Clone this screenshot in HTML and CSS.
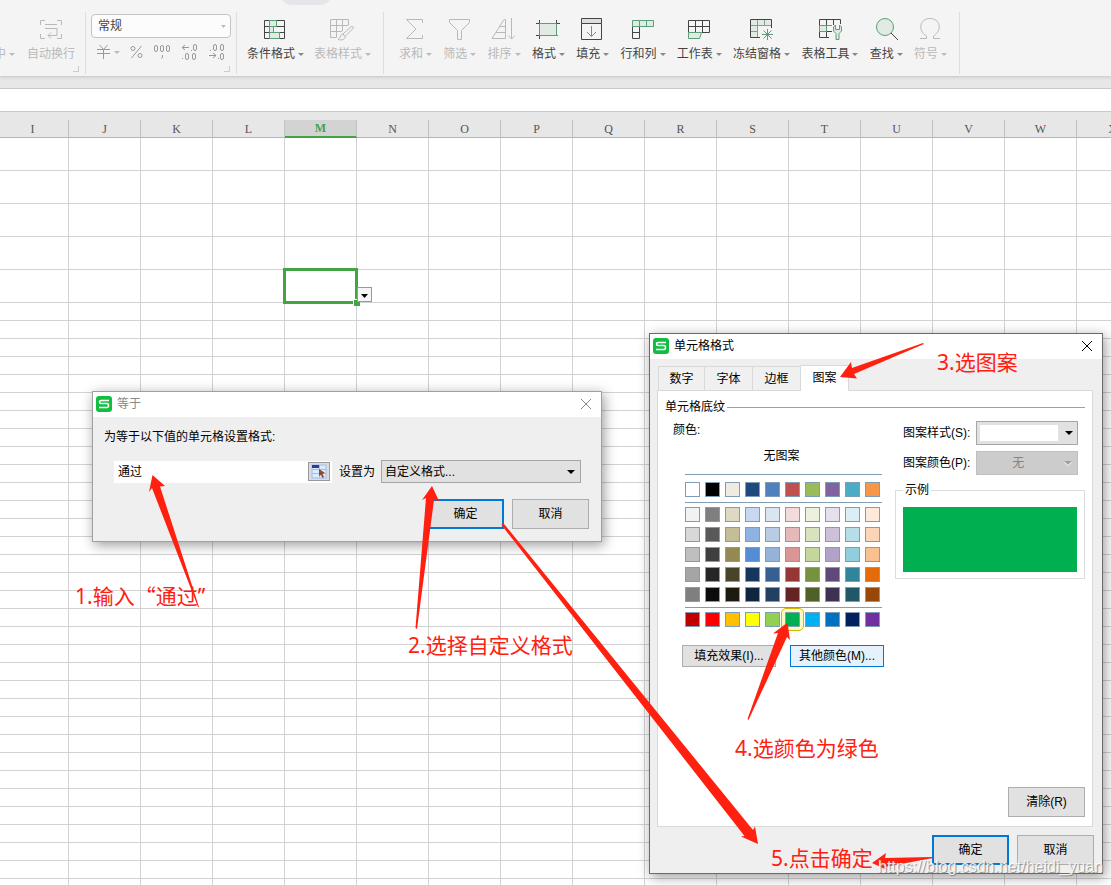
FILE: index.html
```
<!DOCTYPE html>
<html lang="zh-CN">
<head>
<meta charset="utf-8">
<title>单元格格式</title>
<link rel="stylesheet" href="styles.css">
</head>
<body>
<main class="app">
  <header class="ribbon">
    <span class="tab-hint"></span>
    <section class="group group-align">
      <button class="tool off cut"><span class="label caret">中</span></button>
      <button class="tool off">
        <svg class="icon" viewBox="0 0 24 24"><path d="M1.500 8V3.500H6M18 3.500H22.500V8M1.500 17V21.500H6M18 21.500H22.500V17M6 7.500H18M6 11.500H18M18 11.500V18.500H9M12 15.500L9 18.500L12 21.500"/></svg>
        <span class="label">自动换行</span>
      </button>
    </section>
    <section class="group group-number">
      <select class="format-select" aria-label="数字格式"><option>常规</option></select>
      <div class="number-tools">
        <button class="mini caret" aria-label="货币"><svg viewBox="0 0 15 16"><path d="M3.500 1L7.500 5.500L11.500 1M1 5.500H14M1 9.500H14M7.500 5.500V15"/></svg></button>
        <button class="mini" aria-label="百分比"><svg viewBox="0 0 13 16"><circle cx="3" cy="4.500" r="2"/><circle cx="10" cy="11.500" r="2"/><path d="M11.500 2L1.500 14"/></svg></button>
        <button class="mini" aria-label="千位分隔"><svg viewBox="0 0 18 16"><rect x="1.500" y="1.500" width="3" height="6" rx="1.500"/><rect x="7.500" y="1.500" width="3" height="6" rx="1.500"/><rect x="13.500" y="1.500" width="3" height="6" rx="1.500"/><path d="M9.500 11V13L8.500 14.500"/></svg></button>
        <button class="mini" aria-label="增加小数位"><svg viewBox="0 0 18 16"><path d="M2 3.500H9M5 1L2 3.500L5 6M11 6.500H12M2 14.500H3"/><rect x="13.500" y="0.500" width="3" height="6" rx="1.500"/><rect x="5.500" y="9.500" width="3" height="6" rx="1.500"/><rect x="12.500" y="9.500" width="3" height="6" rx="1.500"/></svg></button>
        <button class="mini" aria-label="减少小数位"><svg viewBox="0 0 18 16"><path d="M2 6.500H3M1 11.500H8M5 9L8 11.500L5 14M10 14.500H11"/><rect x="5.500" y="0.500" width="3" height="6" rx="1.500"/><rect x="12.500" y="0.500" width="3" height="6" rx="1.500"/><rect x="12.500" y="9.500" width="3" height="6" rx="1.500"/></svg></button>
      </div>
    </section>
    <section class="group group-style">
      <button class="tool">
        <svg class="icon" viewBox="0 0 24 24"><path d="M.500 3.500H20.500V21.500H.500ZM.500 9.500H20.500M.500 15.500H20.500M12.500 3.500V9.500"/><path class="green tint" d="M5.500 3.500H12.500V9.500H5.500ZM5.500 9.500H9.500V15.500H5.500ZM5.500 15.500H15.500V21.500H5.500Z"/></svg>
        <span class="label caret">条件格式</span>
      </button>
      <button class="tool off">
        <svg class="icon" viewBox="0 0 24 24"><path d="M6.500 20.500H.500V2.500H18.500V8M.500 8.500H18.500M.500 14.500H12M6.500 2.500V20.500M12.500 2.500V14"/><path d="M22 9L13 17L15 19.500L23.500 11ZM13 17C10 17 11 21 8 22.500C12 23.500 15.500 22.500 15 19.500"/></svg>
        <span class="label caret">表格样式</span>
      </button>
    </section>
    <section class="group group-tools">
      <button class="tool off">
        <svg class="icon" viewBox="0 0 24 24"><path d="M18.500 6V2.500H2.500L12 12L2.500 21.500H18.500V18"/></svg>
        <span class="label caret">求和</span>
      </button>
      <button class="tool off">
        <svg class="icon" viewBox="0 0 24 24"><path d="M1.500 2.500H21.500V5.500L13.500 13.500V22.500H9.500V13.500L1.500 5.500Z"/></svg>
        <span class="label caret">筛选</span>
      </button>
      <button class="tool off">
        <svg class="icon" viewBox="0 0 24 24"><path d="M13.500 21.500V2.500H12L0 21.500ZM8 9.500H13.500M4 15.500H13.500M19.500 1V22M16 18.500L19.500 22L23 18.500"/></svg>
        <span class="label caret">排序</span>
      </button>
      <button class="tool">
        <svg class="icon" viewBox="0 0 24 24"><path d="M0 6.500H24M0 18.500H15M3.500 3V22M20.500 3V7"/><path class="green tint" d="M3.500 6.500H20.500V18.500H3.500Z"/><path class="green" d="M20 18.500H22"/></svg>
        <span class="label caret">格式</span>
      </button>
      <button class="tool">
        <svg class="icon" viewBox="0 0 24 24"><path class="shade" d="M.500 1.500H20.500V6.500H.500Z"/><path d="M.500 6.500V22.500H20.500V6.500"/><path class="green" d="M10.500 9V19M6 15L10.500 19.500L15 15"/></svg>
        <span class="label caret">填充</span>
      </button>
      <button class="tool">
        <svg class="icon" viewBox="0 0 24 24"><path d="M1.500 9.500V21.500H8.500V9.500M1.500 15.500H8.500"/><path class="green tint" d="M1.500 3.500H22.500V9.500H1.500ZM8.500 3.500V9.500M15.500 3.500V9.500"/></svg>
        <span class="label caret">行和列</span>
      </button>
      <button class="tool">
        <svg class="icon" viewBox="0 0 24 24"><path d="M1.500 15.500V3.500H22.500V15.500H15M1.500 9.500H22.500M8.500 3.500V15.500M15.500 3.500V15.500"/><path class="green tint" d="M1.500 15.500H14.500L12.500 21.500H1.500Z"/></svg>
        <span class="label caret">工作表</span>
      </button>
      <button class="tool">
        <svg class="icon" viewBox="0 0 24 24"><path class="fill-tint" d="M0 2H21V9H7V21H0Z"/><path class="mid" d="M7.500 3V20M.500 8.500H21M.500 14.500H7M14.500 3V8"/><path d="M10 20.500H.500V2.500H21.500V11"/><path class="green" d="M17.500 12V23M12 17.500H23M13.500 13.500L21.500 21.500M21.500 13.500L13.500 21.500"/></svg>
        <span class="label caret">冻结窗格</span>
      </button>
      <button class="tool">
        <svg class="icon" viewBox="0 0 24 24"><path d="M11 20.500H1.500V2.500H22.500V7M8.500 2.500V20M15.500 2.500V8M1.500 14.500H14"/><path class="green tint" d="M1.500 8.500H8.500V14.500H1.500ZM8.500 8.500H14"/><path class="green tint" d="M17.500 8L15.500 10V14L18 16.500V22.500H21V16.500L23.500 14V10L21.500 8V12.500H17.500Z"/></svg>
        <span class="label caret">表格工具</span>
      </button>
      <button class="tool">
        <svg class="icon" viewBox="0 0 24 24"><circle class="green tint" cx="11" cy="10" r="8.500"/><path d="M17 16L24 23"/></svg>
        <span class="label caret">查找</span>
      </button>
      <button class="tool off">
        <svg class="icon" viewBox="0 0 24 24"><path d="M2 21.500H8.500V19C-1 13 2 1.500 12 1.500S25 13 15.500 19V21.500H22"/></svg>
        <span class="label caret">符号</span>
      </button>
    </section>
  </header>
  <div class="formula-bar"></div>
  <section class="sheet">
    <table class="cells">
      <thead><tr id="columns"></tr></thead>
      <tbody id="rows"></tbody>
    </table>
  </section>

  <section class="dialog dialog-equal" aria-label="等于">
    <div class="titlebar">
      <svg class="logo" viewBox="0 0 16 16"><rect class="logo-bg" width="16" height="16" rx="3"/><path d="M13 4.500H5Q3.500 4.500 3.500 6T5 7.500H11Q12.500 7.500 12.500 9.500T11 11.500H3"/></svg>
      <span class="title">等于</span>
      <button class="close" aria-label="关闭"><svg viewBox="0 0 12 12"><path d="M1 1L11 11M11 1L1 11"/></svg></button>
    </div>
    <div class="equal-body">
      <label for="value">为等于以下值的单元格设置格式:</label>
      <div class="equal-row">
        <div class="ref-box">
          <input id="value" type="text" value="通过">
          <button class="picker" aria-label="选择区域"><svg viewBox="0 0 16 15"><rect class="p1" x="1" y="1" width="14" height="13"/><path class="p2" d="M1 5.500H15M1 9.500H15M8.500 1V14"/><rect class="p3" x="1" y="1" width="7" height="3"/><path class="p4" d="M8 5L14 9L11.500 10L13 13L11.500 14L10 11L8 12Z"/></svg></button>
        </div>
        <label for="preset">设置为</label>
        <select id="preset" class="combo"><option>自定义格式...</option></select>
      </div>
      <div class="actions">
        <button class="btn primary">确定</button>
        <button class="btn">取消</button>
      </div>
    </div>
  </section>

  <section class="dialog dialog-format" aria-label="单元格格式">
    <div class="titlebar">
      <svg class="logo" viewBox="0 0 16 16"><rect class="logo-bg" width="16" height="16" rx="3"/><path d="M13 4.500H5Q3.500 4.500 3.500 6T5 7.500H11Q12.500 7.500 12.500 9.500T11 11.500H3"/></svg>
      <span class="title">单元格格式</span>
      <button class="close" aria-label="关闭"><svg viewBox="0 0 12 12"><path d="M1 1L11 11M11 1L1 11"/></svg></button>
    </div>
    <div class="format-body">
      <nav class="tabs">
        <button class="tab">数字</button><button class="tab">字体</button><button class="tab">边框</button><button class="tab active">图案</button>
      </nav>
      <div class="panel">
        <h2 class="section-title">单元格底纹</h2>
        <div class="columns">
          <div class="colors">
            <p class="colors-label">颜色:</p>
            <button class="no-pattern">无图案</button>
            <div class="palette" id="palette"></div>
            <div class="color-actions">
              <button class="btn short">填充效果(I)...</button>
              <button class="btn short hover">其他颜色(M)...</button>
            </div>
          </div>
          <div class="options">
            <div class="field"><label for="style">图案样式(S):</label><select id="style" class="combo swatch-combo"><option></option></select></div>
            <div class="field"><label for="color">图案颜色(P):</label><select id="color" class="combo" disabled><option>无</option></select></div>
            <fieldset class="sample"><legend>示例</legend><div class="sample-fill"></div></fieldset>
          </div>
        </div>
        <button class="btn clear">清除(R)</button>
      </div>
      <div class="actions">
        <button class="btn primary">确定</button>
        <button class="btn">取消</button>
      </div>
    </div>
  </section>

  <p class="note note-1">1.输入<span class="quoted">“通过</span>”</p>
  <p class="note note-2">2.选择自定义格式</p>
  <p class="note note-3">3.选图案</p>
  <p class="note note-4">4.选颜色为绿色</p>
  <p class="note note-5">5.点击确定</p>
  <svg class="arrows" viewBox="0 0 1111 885" width="1111" height="885">
    <path d="M152.500 475L165 486L160 486.500L199 607H198L152 488L149 492Z"/>
    <path d="M432 486L439 501L434 500L417 629L415.500 628L426 498L422 500Z"/>
    <path d="M502.500 523.500L504.500 524.500L753 830L755 826.500L758 844L741 836.500L744.500 836L501.500 525Z"/>
    <path d="M840 377L851 362L852 368L923 343L924 344L854 374L857 378.500Z"/>
    <path d="M787.500 622.500L773 633.500L778 633L747.500 719L748.500 720L787 637L790 640Z"/>
    <path d="M872 863L886 853L885 858L932 857L933 858L885 867L887 870Z"/>
  </svg>
  <p class="watermark">https://blog.csdn.net/heidi_yuan</p>
</main>
<script src="script.js"></script>
</body>
</html>
```
FILE: styles.css
```
* { box-sizing: border-box; }
body {
  margin: 0;
  font: 12px/16px "Liberation Sans", "Noto Sans CJK SC", sans-serif;
  color: #000;
}
button, input, select { font: inherit; color: inherit; margin: 0; }
button { padding: 0; border: 0; background: none; }
p, h2 { margin: 0; font: inherit; }
.app {
  position: relative;
  display: flex;
  flex-direction: column;
  height: 100vh;
  overflow: hidden;
  background: #e7e7e7;
}

/* ribbon */
.ribbon {
  position: relative;
  display: flex;
  flex: none;
  height: 76px;
  padding-top: 12px;
  background: #f4f4f4;
  color: #444;
  box-shadow: 0 1px 3px #c4c4c4;
}
.tab-hint {
  position: absolute;
  left: 280px;
  top: -20px;
  width: 52px;
  height: 25px;
  border-radius: 12px;
  background: #e5e6ea;
}
.group {
  position: relative;
  display: flex;
  justify-content: space-between;
  height: 62px;
  padding-top: 5px;
  border-right: 1px solid #dedede;
}
.group-align { width: 86px; padding-right: 10px; }
.group-number { width: 151px; padding: 2px 5px; flex-direction: column; justify-content: flex-start; }
.group-style { width: 147px; padding-left: 10px; padding-right: 12px; }
.group-tools { width: 576px; padding-left: 15px; padding-right: 12px; }
.group-align::after, .group-number::after {
  content: "";
  position: absolute;
  right: 6px;
  bottom: 2px;
  width: 5px;
  height: 5px;
  border: solid #ccc;
  border-width: 0 1px 1px 0;
}
.tool { display: flex; flex-direction: column; align-items: center; justify-content: flex-start; gap: 5px; white-space: nowrap; }
.tool.cut { padding-top: 29px; margin-left: -6px; }
.off { color: #b9b9b9; }
.icon { width: 24px; height: 24px; fill: none; stroke: currentColor; stroke-width: 1; overflow: visible; }
.green { stroke: #5b9f78; }
.mid { stroke: #8d9b92; }
.tint, .fill-tint { fill: #e1ebe4; }
.fill-tint { stroke: none; }
.shade { fill: #ddd; }
.caret { display: flex; align-items: center; gap: 3px; }
.caret::after {
  content: "";
  border: 3px solid transparent;
  border-top-color: #888;
  border-bottom: 0;
}
.off .caret::after, .mini.caret::after { border-top-color: #bbb; }
.format-select {
  appearance: none;
  height: 24px;
  padding: 0 6px;
  border: 1px solid #c4c4c4;
  border-radius: 4px;
  background: #fcfcfc url("data:image/svg+xml,%3Csvg xmlns='http://www.w3.org/2000/svg' width='5' height='3'%3E%3Cpath d='M0 0h5L2.5 3z' fill='%23bbb'/%3E%3C/svg%3E") no-repeat right 4px center;
}
.number-tools { display: flex; justify-content: space-between; padding: 6px 5px 0; }
.mini svg { display: block; height: 16px; fill: none; stroke: #999; }

.formula-bar {
  flex: none;
  height: 24px;
  margin-top: 12px;
  background: #fff;
  border: solid #c8c8c8;
  border-width: 1px 0;
}

/* sheet */
.sheet { flex: 1; min-height: 0; overflow: hidden; padding-top: 8px; margin-left: -3px; }
.cells { width: 1152px; table-layout: fixed; border-collapse: separate; border-spacing: 0; }
.cells th {
  height: 18px;
  padding: 2px 0 0;
  border-right: 1px solid #c2c2c2;
  border-bottom: 1px solid #b4b4b4;
  font: 12px/15px "Liberation Serif", serif;
  color: #555;
}
.cells th.current { background: #d3d3d3; color: #43a443; font-weight: bold; border-bottom: 2px solid #43a443; padding-top: 1px; }
.cells td { height: 18px; padding: 0; background: #fff; border: solid #d2d2d2; border-width: 0 1px 1px 0; }
.cells .tall td { height: 33px; }
.cells td.selected { position: relative; }
.selection { position: absolute; inset: -2px; border: 3px solid #43a443; }
.selection::after {
  content: "";
  position: absolute;
  right: -5px;
  bottom: -5px;
  width: 6px;
  height: 6px;
  background: #43a443;
  border: solid #fff;
  border-width: 1px 0 0 1px;
}
.cell-menu {
  position: absolute;
  left: 72px;
  top: 17px;
  z-index: 1;
  width: 15px;
  height: 15px;
  border: 1px solid #8a9cb4;
  background: #f6f6f6 url("data:image/svg+xml,%3Csvg xmlns='http://www.w3.org/2000/svg' width='7' height='4'%3E%3Cpath d='M0 0h7L3.5 4z'/%3E%3C/svg%3E") no-repeat 3px 6px;
}

/* dialogs */
.dialog { position: absolute; background: #efefef; border: 1px solid #a0a0a0; box-shadow: 2px 3px 12px rgba(0, 0, 0, .4); }
.dialog-equal { left: 92px; top: 391px; width: 510px; }
.dialog-format { left: 649px; top: 333px; width: 454px; border-color: #6a6a6a; }
.titlebar { display: flex; align-items: center; height: 25px; padding: 0 9px 1px 3px; background: #fff; }
.dialog-equal .titlebar { color: #888; }
.logo { width: 16px; height: 16px; margin-right: 5px; fill: none; stroke: #fff; stroke-width: 1.500; }
.logo-bg { fill: #12be41; stroke: none; }
.title { flex: 1; }
.close svg { display: block; width: 12px; height: 12px; stroke: currentColor; }
.equal-body { padding: 12px 12px 12px 11px; }
.equal-row { display: flex; align-items: center; margin: 15px 8px 16px 10px; }
.ref-box { display: flex; align-items: center; width: 218px; height: 22px; padding: 1px 2px 1px 4px; margin-right: 7px; background: #fff; }
.ref-box input { flex: 1; min-width: 0; padding: 0; border: 0; outline: 0; background: none; }
.picker { width: 22px; height: 19px; border: 1px solid #999; background: #dcdcdc; display: grid; place-items: center; }
.picker svg { width: 16px; height: 15px; }
.p1 { fill: #dcebff; stroke: #9fbdf0; }
.p2 { stroke: #9fbdf0; }
.p3 { fill: #2a3c9c; }
.p4 { fill: #8a4b3a; }
.combo {
  appearance: none;
  flex: 1;
  height: 23px;
  margin-left: 6px;
  padding: 0 3px;
  border: 1px solid #a6a6a6;
  border-radius: 0;
  background: #e1e1e1 url("data:image/svg+xml,%3Csvg xmlns='http://www.w3.org/2000/svg' width='8' height='4'%3E%3Cpath d='M0 0h8L4 4z'/%3E%3C/svg%3E") no-repeat right 5px center;
}
.actions { display: flex; justify-content: flex-end; gap: 8px; }
.btn { width: 77px; height: 30px; border: 1px solid #adadad; background: #e1e1e1; white-space: nowrap; }
.btn.primary { border: 2px solid #0078d7; }
.btn.short { width: 94px; height: 22px; }
.btn.hover { border-color: #0078d7; background: #e5f1fb; }

.format-body { padding: 7px 9px 8px 7px; }
.tabs { display: flex; align-items: flex-end; padding-left: 1px; }
.tab { width: 48px; height: 24px; border: 1px solid #d9d9d9; border-bottom: 0; border-left-width: 0; background: #f0f0f0; }
.tab:first-child { width: 47px; border-left-width: 1px; }
.tab.active { position: relative; width: 49px; height: 26px; margin: -1px 0 -1px -1px; background: #fff; border-left-width: 1px; padding-bottom: 1px; }
.panel { display: flex; flex-direction: column; height: 437px; padding: 8px 7px 9px; background: #fff; border: 1px solid #d9d9d9; }
.section-title { display: flex; align-items: center; gap: 2px; }
.section-title::after { content: ""; flex: 1; height: 1px; background: #a0a0a0; }
.columns { display: flex; justify-content: space-between; flex: 1; }
.colors { width: 219px; padding: 7px 0 0 8px; }
.no-pattern { display: block; margin: 10px 0 0 12px; width: 193px; }
.palette { width: 197px; margin: 10px 0 0 12px; }
.swatches { display: grid; grid-template-columns: repeat(10, 15px); gap: 5px; border-top: 1px solid #819db5; }
.swatches.theme { padding: 7px 0 5px; }
.swatches.shades { padding: 4px 0 5px; }
.swatches.standard { padding: 4px 0; }
.swatch { width: 15px; height: 15px; border: 1px solid #7f9db9; }
.swatch.picked { outline: 1px solid #d0b800; outline-offset: 3px; border-radius: 1px; box-shadow: 0 0 0 3px #fbf8c4; }
.color-actions { display: flex; gap: 14px; margin: 14px 0 0 9px; }
.options { width: 190px; padding-top: 6px; }
.field { display: flex; align-items: center; justify-content: space-between; height: 24px; margin: 0 8px 6px; white-space: nowrap; }
.field .combo { flex: none; width: 102px; height: 24px; }
.swatch-combo { background-image: url("data:image/svg+xml,%3Csvg xmlns='http://www.w3.org/2000/svg' width='94' height='16'%3E%3Cpath d='M0 0h78v16H0z' fill='white'/%3E%3Cpath d='M85 6h8L89 10z'/%3E%3C/svg%3E"); background-position: 3px center; }
.combo:disabled { background-color: #ccc; border-color: #bfbfbf; color: #838383; opacity: 1; padding-left: 35px; background-image: url("data:image/svg+xml,%3Csvg xmlns='http://www.w3.org/2000/svg' width='8' height='5'%3E%3Cpath d='M0 1h8L4 5z' fill='white'/%3E%3Cpath d='M0 0h8L4 4z' fill='%23a0a0a0'/%3E%3C/svg%3E"); }
.sample { margin: 7px 0 0; padding: 9px 7px 6px; border: 1px solid #dcdcdc; }
.sample legend { padding: 0 2px; }
.sample-fill { height: 65px; background: #00b050; }
.clear { align-self: flex-end; }
.format-body > .actions { margin: 8px -1px 0 0; }

/* annotations */
.arrows { position: absolute; left: 0; top: 0; fill: #ff2010; pointer-events: none; }
.note {
  position: absolute;
  font: 21px/30px "Noto Sans", "Noto Sans CJK SC", sans-serif;
  color: #ff2010;
  white-space: pre;
}
.quoted { font-family: "Noto Sans CJK SC", sans-serif; }
.note-1 { left: 75px; top: 580px; }
.note-2 { left: 408px; top: 630px; }
.note-3 { left: 937px; top: 347px; }
.note-4 { left: 735px; top: 733px; }
.note-5 { left: 771px; top: 843px; }
.watermark {
  position: absolute;
  left: 878px;
  top: 857px;
  font-size: 16px;
  line-height: 20px;
  color: rgba(255, 255, 255, .85);
  text-shadow: 1px 1px 1px #888;
}
```
FILE: script.js
```
const columns = 'IJKLMNOPQRSTUVWX'.split('');
const SELECTED_COLUMN = 4;
const SELECTED_ROW = 4;

document.getElementById('columns').innerHTML = columns
  .map((name, i) => `<th${i === SELECTED_COLUMN ? ' class="current"' : ''}>${name}</th>`)
  .join('');

const selectedCell =
  '<td class="selected"><span class="selection"></span><button class="cell-menu" aria-label="选项"></button></td>';
let rows = '';
for (let r = 0; r < 38; r++) {
  rows += r < 5 ? '<tr class="tall">' : '<tr>';
  rows += columns
    .map((_, c) => (r === SELECTED_ROW && c === SELECTED_COLUMN ? selectedCell : '<td></td>'))
    .join('');
  rows += '</tr>';
}
document.getElementById('rows').innerHTML = rows;

const palette = {
  theme: ['#ffffff #000000 #eeece1 #1f497d #4f81bd #c0504d #9bbb59 #8064a2 #4bacc6 #f79646'],
  shades: [
    '#f2f2f2 #7f7f7f #ddd9c3 #c6d9f0 #dbe5f1 #f2dcdb #ebf1dd #e5e0ec #dbeef3 #fdeada',
    '#d8d8d8 #595959 #c4bd97 #8db3e2 #b8cce4 #e5b9b7 #d7e3bc #ccc1d9 #b7dde8 #fbd5b5',
    '#bfbfbf #3f3f3f #938953 #548dd4 #95b3d7 #d99694 #c3d69b #b2a2c7 #92cddc #fac08f',
    '#a5a5a5 #262626 #494429 #17365d #366092 #953734 #76923c #5f497a #31859b #e36c09',
    '#7f7f7f #0c0c0c #1d1b10 #0f243e #244061 #632423 #4f6128 #3f3151 #205867 #974806'
  ],
  standard: ['#c00000 #ff0000 #ffc000 #ffff00 #92d050 #00b050 #00b0f0 #0070c0 #002060 #7030a0']
};
document.getElementById('palette').innerHTML = Object.entries(palette)
  .map(([group, lines]) => {
    const swatches = lines.join(' ').split(' ')
      .map(c => `<button class="swatch${c === '#00b050' ? ' picked' : ''}" style="background:${c}" aria-label="${c}"></button>`)
      .join('');
    return `<div class="swatches ${group}">${swatches}</div>`;
  })
  .join('');
```
